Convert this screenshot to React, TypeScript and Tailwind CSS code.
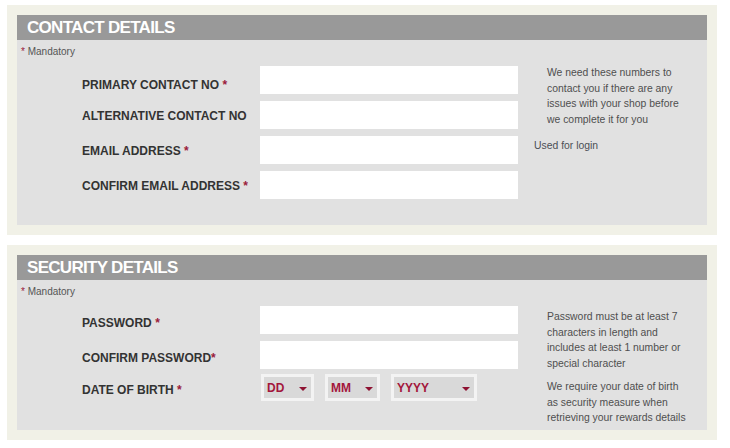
import React from 'react';

const Star = () => <span className="text-[#9b1b3b]">*</span>;

const Header = ({ title }: { title: string }) => (
  <div className="h-[25px] bg-[#999999] pl-[10px] flex items-center">
    <h2 className="text-[17px] font-bold tracking-[-0.7px] text-white leading-none">{title}</h2>
  </div>
);

const Mandatory = () => (
  <div className="pl-[4px] pt-[6px] h-[26px] text-[10px] leading-[12px] text-[#555]">
    <Star /> Mandatory
  </div>
);

const Row = ({ label, star, tight, shift }: { label: string; star?: boolean; tight?: boolean; shift?: string }) => (
  <div className="flex h-[28px]">
    <div className={`w-[178px] text-[12px] font-bold text-[#333] leading-[28px] ${shift ?? 'pt-[1px]'}`}>
      {label}
      {star && (tight ? <Star /> : <> <Star /></>)}
    </div>
    <div className="w-[258px] h-[28px] bg-white" />
  </div>
);

const Select = ({ text, width }: { text: string; width: string }) => (
  <div className={`${width} h-[27px] border-[3px] border-[#f3f3f3] bg-[#d9d9d9] flex items-center justify-between pl-[3px] pr-[4px]`}>
    <span className="text-[12px] font-bold text-[#a3163c] leading-none">{text}</span>
    <svg width="8" height="4" viewBox="0 0 8 4" className="mt-[2px]">
      <path d="M0 0 L8 0 L4 4 Z" fill="#8e1232" />
    </svg>
  </div>
);

const App = () => {
  return (
    <div className="w-[730px] h-[448px] bg-white pt-[5px] font-['Liberation_Sans',Arial,sans-serif]">
      {/* contact */}
      <div className="ml-[7px] w-[710px] bg-[#f1f1e7] p-[10px]">
        <Header title="CONTACT DETAILS" />
        <div className="bg-[#e1e1e1] pb-[26px]">
          <Mandatory />
          <div className="flex pl-[65px]">
            <div className="flex flex-col gap-[7px]">
              <Row label="PRIMARY CONTACT NO" star shift="pt-[5px]" />
              <Row label="ALTERNATIVE CONTACT NO" />
              <Row label="EMAIL ADDRESS" star />
              <Row label="CONFIRM EMAIL ADDRESS" star />
            </div>
            <div className="pl-[29px] -mt-[1px] text-[10.4px] leading-[15.5px] text-[#4f4f4f]">
              <p>
                We need these numbers to<br />
                contact you if there are any<br />
                issues with your shop before<br />
                we complete it for you
              </p>
              <p className="mt-[11px] -ml-[13px] text-[#4b4f55]">Used for login</p>
            </div>
          </div>
        </div>
      </div>

      {/* security */}
      <div className="ml-[7px] mt-[10px] w-[710px] bg-[#f1f1e7] p-[10px]">
        <Header title="SECURITY DETAILS" />
        <div className="bg-[#e1e1e1] pb-[4px]">
          <Mandatory />
          <div className="flex pl-[65px]">
            <div className="flex flex-col gap-[7px]">
              <Row label="PASSWORD" star shift="pt-[3px]" />
              <Row label="CONFIRM PASSWORD" star tight shift="pt-[3px]" />
              <div className="flex h-[27px] -mt-[2px]">
                <div className="w-[178px] text-[12px] font-bold text-[#333] leading-[27px] pt-[3px]">
                  DATE OF BIRTH <Star />
                </div>
                <div className="flex gap-[11px] pl-[1px]">
                  <Select text="DD" width="w-[53px]" />
                  <Select text="MM" width="w-[55px]" />
                  <Select text="YYYY" width="w-[86px]" />
                </div>
              </div>
            </div>
            <div className="pl-[29px] pt-[3px] text-[10.4px] leading-[15.5px] text-[#4f4f4f]">
              <p>
                Password must be at least 7<br />
                characters in length and<br />
                includes at least 1 number or<br />
                special character
              </p>
              <p className="mt-[8px]">
                We require your date of birth<br />
                as security measure when<br />
                retrieving your rewards details
              </p>
            </div>
          </div>
        </div>
      </div>
    </div>
  );
};

export default App;
